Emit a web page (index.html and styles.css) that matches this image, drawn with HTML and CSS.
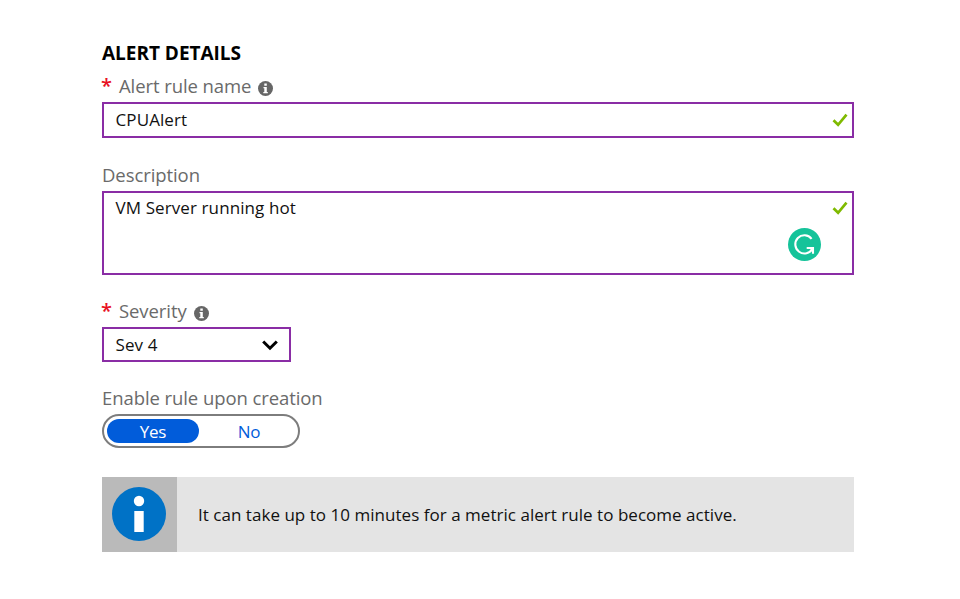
FILE: index.html
```html
<!DOCTYPE html>
<html lang="en">
<head>
<meta charset="utf-8">
<title>Alert details</title>
<link rel="stylesheet" href="styles.css">
</head>
<body>
<main class="form">
  <h1 class="title">ALERT DETAILS</h1>

  <section class="field">
    <div class="label">
      <span class="required">*</span><span>Alert rule name</span>
      <svg class="hint" viewBox="0 0 15 15"><circle cx="7.5" cy="7.5" r="7.5" fill="#666"/><path d="M6.3 2.5h2.5v2.3H6.3zM5.5 6h3.3v5h1v1.3H5.3V11h1V7.2h-.8z" fill="#fff"/></svg>
    </div>
    <div class="box name-box">
      <span>CPUAlert</span>
      <svg class="check" viewBox="0 0 16 14"><path d="M1.5 7.2 6.1 11.8 14.5 1.7" fill="none" stroke="#7fba00" stroke-width="2.7"/></svg>
    </div>
  </section>

  <section class="field">
    <div class="label"><span>Description</span></div>
    <div class="box area">
      <span>VM Server running hot</span>
      <svg class="check" viewBox="0 0 16 14"><path d="M1.5 7.2 6.1 11.8 14.5 1.7" fill="none" stroke="#7fba00" stroke-width="2.7"/></svg>
      <svg class="badge" viewBox="0 0 33 33"><circle cx="16.5" cy="16.5" r="16.5" fill="#15c39a"/><path d="M23.6 10.8A9.1 9.1 0 1 0 24.5 20.5M18.7 20H25V25.8" fill="none" stroke="#fff" stroke-width="2.1"/></svg>
    </div>
  </section>

  <section class="field">
    <div class="label">
      <span class="required">*</span><span>Severity</span>
      <svg class="hint" viewBox="0 0 15 15"><circle cx="7.5" cy="7.5" r="7.5" fill="#666"/><path d="M6.3 2.5h2.5v2.3H6.3zM5.5 6h3.3v5h1v1.3H5.3V11h1V7.2h-.8z" fill="#fff"/></svg>
    </div>
    <div class="box select">
      <span>Sev 4</span>
      <svg class="chevron" viewBox="0 0 16 11"><path d="M1.2 1.5 8 8.2 14.8 1.5" fill="none" stroke="#000" stroke-width="3"/></svg>
    </div>
  </section>

  <section class="field">
    <div class="label"><span>Enable rule upon creation</span></div>
    <div class="toggle">
      <div class="option on">Yes</div>
      <div class="option">No</div>
    </div>
  </section>

  <aside class="notice">
    <div class="notice-icon">
      <svg viewBox="0 0 54 54"><circle cx="27" cy="27" r="27" fill="#0072c6"/><circle cx="27" cy="14" r="5.2" fill="#fff"/><path d="M22.3 24h9.4v21h-9.4z" fill="#fff"/></svg>
    </div>
    <span class="message">It can take up to 10 minutes for a metric alert rule to become active.</span>
  </aside>
</main>
</body>
</html>
```
FILE: styles.css
```css
* { box-sizing: border-box; }
body {
  margin: 0;
  background: #fff;
  color: #111;
  font: 400 17px/24px "Open Sans", "Noto Sans", sans-serif;
  letter-spacing: 0.1px;
  white-space: nowrap;
}
svg { display: block; flex: none; }
.form { width: 752px; margin: 41px 0 0 102px; }
.title { margin: 0 0 9px; height: 24px; font-size: 19px; line-height: 24px; font-weight: 700; color: #000; letter-spacing: -0.02px; }
.label { display: flex; height: 28px; font-size: 18.5px; line-height: 24px; color: #6a6a6a; letter-spacing: -0.08px; }
.required { width: 16px; margin-left: -1px; margin-right: 2px; color: #e81123; font-size: 20px; font-weight: 600; }
.hint { width: 15px; height: 15px; margin: 7px 0 0 7px; }
.box { display: flex; justify-content: space-between; border: 2px solid #8a2da5; padding-left: 11.5px; }
.name-box { height: 36px; padding-top: 4px; margin-bottom: 25px; }
.check { width: 16px; height: 14px; margin: 5px 4px 0 0; }
.area { position: relative; height: 84px; padding-top: 3px; margin-bottom: 24px; }
.badge { position: absolute; width: 33px; height: 33px; right: 31px; top: 35px; }
.select { width: 189px; height: 35px; padding-top: 4px; margin-bottom: 24px; }
.chevron { width: 16px; height: 11px; margin: 7px 11px 0 0; }
.toggle { display: flex; width: 198px; height: 34px; padding: 3px; border: 2px solid #7d7d7d; border-radius: 17px; }
.option { width: 92px; height: 24px; text-align: center; color: #015cda; border-radius: 12px; line-height: 25px; letter-spacing: -0.2px; }
.option + .option { margin-left: 4px; }
.option.on { background: #015cda; color: #fff; }
.notice { display: flex; height: 75px; margin-top: 29px; background: #e4e4e4; line-height: 75px; }
.notice-icon { width: 75px; padding: 10px; margin-right: 21px; background: #bababa; }
.notice-icon svg { width: 54px; height: 54px; }
.message { letter-spacing: 0.03px; }
```
